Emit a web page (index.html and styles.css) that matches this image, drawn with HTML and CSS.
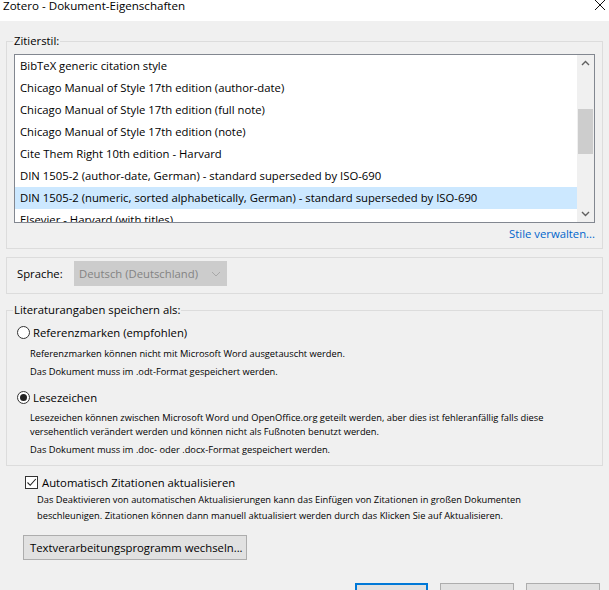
FILE: index.html
```html
<!DOCTYPE html>
<html lang="de">
<head>
<meta charset="utf-8">
<title>Zotero - Dokument-Eigenschaften</title>
<link rel="stylesheet" href="styles.css">
</head>
<body>
<div class="window">
  <div class="titlebar">
    <span class="title">Zotero - Dokument-Eigenschaften</span>
    <svg class="close" width="12" height="12" viewBox="0 0 12 12"><path d="M1 1 L11 11 M11 1 L1 11" stroke="#111" stroke-width="1" fill="none"/></svg>
  </div>

  <fieldset class="group style-group">
    <legend>Zitierstil:</legend>
    <div class="listbox">
      <ul class="items">
        <li>BibTeX generic citation style</li>
        <li>Chicago Manual of Style 17th edition (author-date)</li>
        <li>Chicago Manual of Style 17th edition (full note)</li>
        <li>Chicago Manual of Style 17th edition (note)</li>
        <li>Cite Them Right 10th edition - Harvard</li>
        <li>DIN 1505-2 (author-date, German) - standard superseded by ISO-690</li>
        <li class="selected">DIN 1505-2 (numeric, sorted alphabetically, German) - standard superseded by ISO-690</li>
        <li>Elsevier - Harvard (with titles)</li>
      </ul>
      <div class="scrollbar">
        <svg class="arrow" width="17" height="17" viewBox="0 0 17 17"><path d="M5 10 L8.5 6.5 L12 10" stroke="#606060" stroke-width="1.4" fill="none"/></svg>
        <div class="track"><div class="thumb"></div></div>
        <svg class="arrow" width="17" height="17" viewBox="0 0 17 17"><path d="M5 7 L8.5 10.5 L12 7" stroke="#606060" stroke-width="1.4" fill="none"/></svg>
      </div>
    </div>
    <div class="manage"><a class="link">Stile verwalten...</a></div>
  </fieldset>

  <div class="group lang-group">
    <span class="lang-label">Sprache:</span>
    <div class="select">
      <span>Deutsch (Deutschland)</span>
      <svg width="10" height="6" viewBox="0 0 10 6"><path d="M1 1 L5 5 L9 1" stroke="#a8a8a8" stroke-width="1" fill="none"/></svg>
    </div>
  </div>

  <fieldset class="group format-group">
    <legend>Literaturangaben speichern als:</legend>
    <div class="option">
      <div class="radio-row"><span class="radio"></span><span>Referenzmarken (empfohlen)</span></div>
      <div class="desc">
        <p>Referenzmarken können nicht mit Microsoft Word ausgetauscht werden.</p>
        <p>Das Dokument muss im .odt-Format gespeichert werden.</p>
      </div>
    </div>
    <div class="option">
      <div class="radio-row"><span class="radio checked"></span><span>Lesezeichen</span></div>
      <div class="desc">
        <p class="tight">Lesezeichen können zwischen Microsoft Word und OpenOffice.org geteilt werden, aber dies ist fehleranfällig falls diese<br>versehentlich verändert werden und können nicht als Fußnoten benutzt werden.</p>
        <p>Das Dokument muss im .doc- oder .docx-Format gespeichert werden.</p>
      </div>
    </div>
  </fieldset>

  <div class="auto">
    <div class="check-row">
      <span class="checkbox"><svg width="11" height="11" viewBox="0 0 11 11"><path d="M1.5 5.5 L4.2 8.3 L9.8 2" stroke="#222" stroke-width="1.1" fill="none"/></svg></span>
      <span>Automatisch Zitationen aktualisieren</span>
    </div>
    <p class="desc auto-desc">Das Deaktivieren von automatischen Aktualisierungen kann das Einfügen von Zitationen in großen Dokumenten<br>beschleunigen. Zitationen können dann manuell aktualisiert werden durch das Klicken Sie auf Aktualisieren.</p>
  </div>

  <div class="switch-row"><button class="btn">Textverarbeitungsprogramm wechseln...</button></div>

  <div class="dialog-buttons">
    <button class="btn dlg primary"></button>
    <button class="btn dlg"></button>
    <button class="btn dlg"></button>
  </div>
</div>
</body>
</html>
```

FILE: styles.css
```css
* { box-sizing: border-box; }
html, body { margin: 0; padding: 0; }
body {
  width: 609px;
  height: 590px;
  overflow: hidden;
  background: #f0f0f0;
  font-family: "Open Sans", "Noto Sans", sans-serif;
  font-size: 11.3px;
  color: #000;
}
.window { display: flex; flex-direction: column; width: 609px; height: 590px; }

.titlebar {
  height: 21px;
  background: #fff;
  display: flex;
  align-items: flex-start;
  justify-content: space-between;
  padding: 0 3px 0 3px;
  flex: none;
}
.title { font-size: 11.6px; line-height: 16px; margin-top: -2px; }
.close { margin-top: -1px; }

.group {
  border: 1px solid #dcdcdc;
  margin: 0 6px;
  min-width: 0;
  padding: 0 7px;
}
.group legend { padding: 0 1px; line-height: 16px; margin-left: -1px; }

.group.style-group { margin-top: 12px; padding-top: 5px; padding-bottom: 5px; }

.listbox {
  display: flex;
  height: 169px;
  border: 1px solid #828790;
  background: #fff;
}
.items {
  list-style: none;
  margin: 0;
  padding: 0;
  flex: 1;
  overflow: hidden;
}
.items li {
  height: 22px;
  line-height: 22px;
  padding-left: 5px;
  white-space: nowrap;
}
.items li.selected { background: #cce8ff; }

.scrollbar {
  width: 17px;
  background: #f0f0f0;
  display: flex;
  flex-direction: column;
}
.arrow { display: block; flex: none; }
.track { flex: 1; padding-top: 37px; }
.thumb { height: 45px; margin: 0 1px; background: #cdcdcd; }

.manage { display: flex; justify-content: flex-end; padding-top: 2px; }
.link { color: #0066cc; line-height: 18px; }

.group.lang-group {
  margin-top: 8px;
  display: flex;
  align-items: center;
  padding: 3px 0 7px 10px;
}
.lang-label { width: 57px; }
.select {
  width: 153px;
  height: 25px;
  background: #cccccc;
  border: 1px solid #cccccc;
  color: #838383;
  display: flex;
  align-items: center;
  justify-content: space-between;
  padding: 0 5px 0 4px;
}

.group.format-group { margin-top: 8px; padding-top: 2px; padding-bottom: 8px; }
.format-group .option { margin-left: 3px; }
.format-group .option:first-of-type { margin-top: 2px; }
.option + .option { margin-top: 8px; }
.radio-row { display: flex; align-items: center; height: 20px; gap: 3px; }
.radio {
  width: 13px; height: 13px;
  border: 1px solid #333;
  border-radius: 50%;
  background: #fff;
  display: flex; align-items: center; justify-content: center;
}
.radio.checked::after {
  content: "";
  width: 7px; height: 7px;
  border-radius: 50%;
  background: #222;
}
.desc { font-size: 9.3px; padding-left: 13px; }
.desc p { margin: 0; line-height: 15px; }
.desc p.tight { line-height: 14px; }
.desc p + p { margin-top: 3px; }
.option .desc { margin-top: 4px; }

.auto { padding-left: 25px; margin-top: 8px; }
.check-row { display: flex; align-items: center; height: 16px; gap: 4px; }
.checkbox {
  width: 13px; height: 13px;
  border: 1px solid #333;
  background: #fff;
  display: flex; align-items: center; justify-content: center;
}
.auto-desc { margin: 2px 0 0; padding-left: 12px; line-height: 16px; }

.switch-row { padding-left: 23px; margin-top: 11px; }
.btn {
  font-family: inherit;
  font-size: 11.3px;
  color: #000;
  background: #e1e1e1;
  border: 1px solid #adadad;
  height: 25px;
  padding: 0 6px;
  margin: 0;
  white-space: nowrap;
}
.switch-row .btn { width: 224px; text-align: left; }

.dialog-buttons {
  display: flex;
  justify-content: flex-end;
  gap: 12px;
  padding-right: 9px;
  margin-top: 23px;
}
.dlg { width: 74px; height: 25px; }
.dlg.primary { border: 2px solid #0078d7; width: 73px; }
```
